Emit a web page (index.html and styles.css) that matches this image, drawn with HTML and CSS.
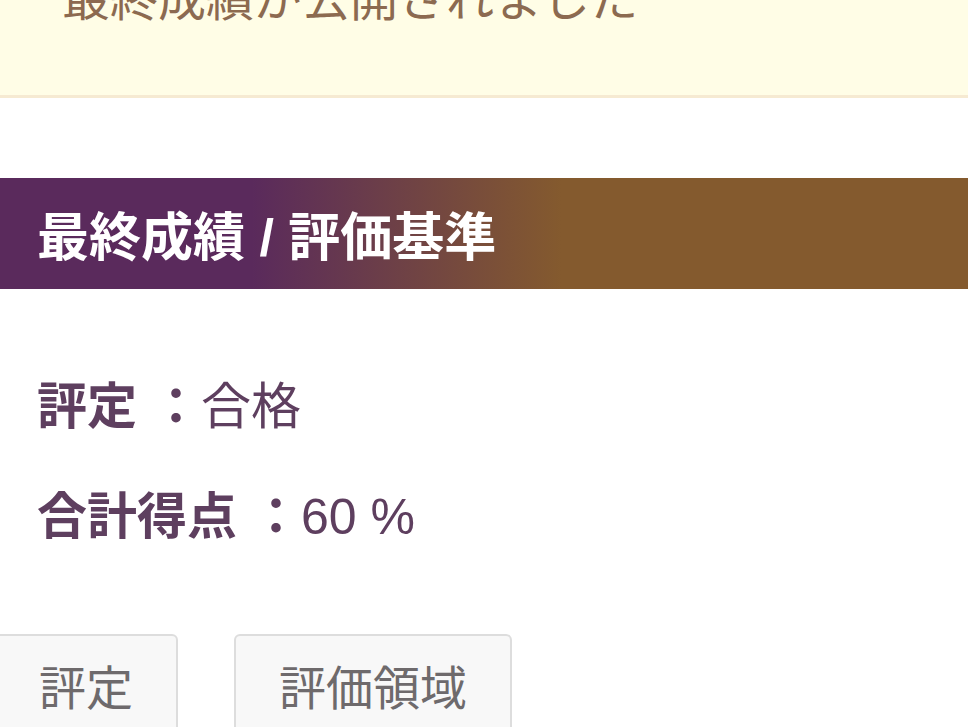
FILE: index.html
```html
<!DOCTYPE html>
<html lang="ja">
<head>
<meta charset="utf-8">
<link rel="stylesheet" href="styles.css">
</head>
<body>
<div class="notice"><p class="notice-text">最終成績が公開されました</p></div>
<h2 class="section-title">最終成績 / 評価基準</h2>
<div class="results">
  <p class="row"><span class="label">評定 ：</span>合格</p>
  <p class="row"><span class="label">合計得点 ：</span>60 %</p>
</div>
<div class="tabs">
  <button class="tab first">評定</button>
  <button class="tab">評価領域</button>
</div>
</body>
</html>
```
FILE: styles.css
```css
html, body {
  margin: 0;
  padding: 0;
  background: #ffffff;
  overflow: hidden;
}
body {
  width: 968px;
  height: 727px;
  font-family: "Liberation Sans", "Noto Sans CJK JP", sans-serif;
}
.notice {
  height: 95px;
  background: #fffde6;
  border-bottom: 3px solid #f6ead2;
  box-sizing: content-box;
  overflow: hidden;
}
.notice-text {
  margin: -30px 0 0 62px;
  font-size: 48px;
  line-height: 60px;
  color: #8c6a50;
  font-weight: 400;
}
.section-title {
  margin: 80px 0 0 0;
  height: 111px;
  display: flex;
  align-items: center;
  padding-left: 37px;
  box-sizing: border-box;
  font-size: 52px;
  font-weight: 700;
  color: #ffffff;
  background: linear-gradient(to right, #5a2a5c 0%, #5a2a5c 26%, #845a2e 58%, #845a2e 100%);
}
.results {
  padding: 84px 0 83px 37px;
}
.row {
  margin: 0 0 42px 0;
  font-size: 50px;
  line-height: 68px;
  color: #5e3f5f;
}
.row:last-child {
  margin-bottom: 0;
}
.label {
  font-weight: 700;
}
.tabs {
  display: flex;
  gap: 56px;
  margin-left: -6px;
}
.tab {
  font-family: "Liberation Sans", "Noto Sans CJK JP", sans-serif;
  font-size: 47px;
  color: #6e6a6c;
  background: #f8f8f8;
  border: 2px solid #dddddd;
  border-radius: 6px;
  padding: 19px 43px 40px;
  line-height: 68px;
}
```
